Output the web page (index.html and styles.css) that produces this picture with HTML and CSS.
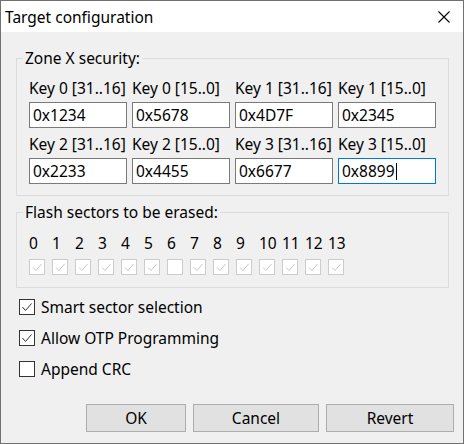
FILE: index.html
```html
<!DOCTYPE html>
<html>
<head>
<meta charset="utf-8">
<link rel="stylesheet" href="styles.css">
</head>
<body>
<div class="window">
  <div class="titlebar">
    <span class="title">Target configuration</span>
    <svg class="close" width="12" height="12" viewBox="0 0 12 12"><path d="M0.5 0.5 L11.5 11.5 M11.5 0.5 L0.5 11.5" stroke="#000" stroke-width="1.1" fill="none"/></svg>
  </div>
  <div class="content">
    <fieldset class="group keys">
      <legend>Zone X security:</legend>
      <div class="keygrid">
        <div class="cell"><div class="lbl">Key 0 [31..16]</div><div class="field">0x1234</div></div>
        <div class="cell"><div class="lbl">Key 0 [15..0]</div><div class="field">0x5678</div></div>
        <div class="cell"><div class="lbl">Key 1 [31..16]</div><div class="field">0x4D7F</div></div>
        <div class="cell"><div class="lbl">Key 1 [15..0]</div><div class="field">0x2345</div></div>
        <div class="cell"><div class="lbl">Key 2 [31..16]</div><div class="field">0x2233</div></div>
        <div class="cell"><div class="lbl">Key 2 [15..0]</div><div class="field">0x4455</div></div>
        <div class="cell"><div class="lbl">Key 3 [31..16]</div><div class="field">0x6677</div></div>
        <div class="cell"><div class="lbl">Key 3 [15..0]</div><div class="field focus">0x8899<span class="caret"></span></div></div>
      </div>
    </fieldset>
    <fieldset class="group sectors">
      <legend>Flash sectors to be erased:</legend>
      <div class="secgrid">
        <div class="sec"><span class="num">0</span><span class="dbox"><svg viewBox="0 0 14 14"><path d="M3 7.5 L6 10.5 L11.5 4" /></svg></span></div>
        <div class="sec"><span class="num">1</span><span class="dbox"><svg viewBox="0 0 14 14"><path d="M3 7.5 L6 10.5 L11.5 4" /></svg></span></div>
        <div class="sec"><span class="num">2</span><span class="dbox"><svg viewBox="0 0 14 14"><path d="M3 7.5 L6 10.5 L11.5 4" /></svg></span></div>
        <div class="sec"><span class="num">3</span><span class="dbox"><svg viewBox="0 0 14 14"><path d="M3 7.5 L6 10.5 L11.5 4" /></svg></span></div>
        <div class="sec"><span class="num">4</span><span class="dbox"><svg viewBox="0 0 14 14"><path d="M3 7.5 L6 10.5 L11.5 4" /></svg></span></div>
        <div class="sec"><span class="num">5</span><span class="dbox"><svg viewBox="0 0 14 14"><path d="M3 7.5 L6 10.5 L11.5 4" /></svg></span></div>
        <div class="sec"><span class="num">6</span><span class="dbox"></span></div>
        <div class="sec"><span class="num">7</span><span class="dbox"><svg viewBox="0 0 14 14"><path d="M3 7.5 L6 10.5 L11.5 4" /></svg></span></div>
        <div class="sec"><span class="num">8</span><span class="dbox"><svg viewBox="0 0 14 14"><path d="M3 7.5 L6 10.5 L11.5 4" /></svg></span></div>
        <div class="sec"><span class="num">9</span><span class="dbox"><svg viewBox="0 0 14 14"><path d="M3 7.5 L6 10.5 L11.5 4" /></svg></span></div>
        <div class="sec"><span class="num">10</span><span class="dbox"><svg viewBox="0 0 14 14"><path d="M3 7.5 L6 10.5 L11.5 4" /></svg></span></div>
        <div class="sec"><span class="num">11</span><span class="dbox"><svg viewBox="0 0 14 14"><path d="M3 7.5 L6 10.5 L11.5 4" /></svg></span></div>
        <div class="sec"><span class="num">12</span><span class="dbox"><svg viewBox="0 0 14 14"><path d="M3 7.5 L6 10.5 L11.5 4" /></svg></span></div>
        <div class="sec"><span class="num">13</span><span class="dbox"><svg viewBox="0 0 14 14"><path d="M3 7.5 L6 10.5 L11.5 4" /></svg></span></div>
      </div>
    </fieldset>
    <div class="options">
      <div class="opt"><span class="box"><svg viewBox="0 0 14 14"><path d="M2.5 7 L5.5 10.5 L11.5 3.5" /></svg></span><span>Smart sector selection</span></div>
      <div class="opt"><span class="box"><svg viewBox="0 0 14 14"><path d="M2.5 7 L5.5 10.5 L11.5 3.5" /></svg></span><span>Allow OTP Programming</span></div>
      <div class="opt"><span class="box"></span><span>Append CRC</span></div>
    </div>
    <div class="buttons">
      <button class="btn ok">OK</button>
      <button class="btn cancel">Cancel</button>
      <button class="btn revert">Revert</button>
    </div>
  </div>
</div>
</body>
</html>
```

FILE: styles.css
```css
html, body {
  margin: 0;
  padding: 0;
  background: #ffffff;
}
body {
  font-family: "Noto Sans", "DejaVu Sans", sans-serif;
  font-size: 15.5px;
  color: #000;
}
.window {
  box-sizing: border-box;
  width: 464px;
  height: 444px;
  border: 1px solid #707070;
  display: flex;
  flex-direction: column;
  background: #f0f0f0;
}
.titlebar {
  height: 31px;
  flex: none;
  background: #ffffff;
  display: flex;
  align-items: center;
  justify-content: space-between;
  padding: 0 13px 0 4px;
}
.title {
  font-size: 15.5px;
  line-height: 20px;
  padding-top: 1px;
}
.close {
  display: block;
}
.content {
  flex: 1;
  display: flex;
  flex-direction: column;
  padding: 0 14px 0 15px;
}
.group {
  margin: 0;
  border: 1px solid #dcdcdc;
  min-width: 0;
}
.group legend {
  padding: 0 2px;
  margin-left: -6px;
  line-height: 20px;
  font-size: 15.5px;
}
.keys {
  margin-top: 16px;
  padding: 10px 12px 11px 12px;
}
.keygrid {
  display: grid;
  grid-template-columns: repeat(4, 98px);
  column-gap: 5px;
  row-gap: 6px;
}
.lbl {
  line-height: 20px;
  margin-bottom: 4px;
  white-space: nowrap;
}
.field {
  box-sizing: border-box;
  height: 26px;
  border: 1px solid #7a7a7a;
  background: #fff;
  padding: 0 3px;
  line-height: 24px;
  display: flex;
  align-items: center;
}
.field.focus {
  border-color: #0078d7;
}
.caret {
  display: inline-block;
  width: 1px;
  height: 17px;
  background: #000;
  margin-left: 1px;
}
.sectors {
  margin-top: 6px;
  padding: 11px 12px 12px 12px;
}
.secgrid {
  display: grid;
  grid-template-columns: repeat(14, 23px);
}
.sec {
  display: flex;
  flex-direction: column;
  gap: 6px;
}
.num {
  line-height: 20px;
}
.dbox, .box {
  box-sizing: border-box;
  width: 16px;
  height: 16px;
  display: block;
  background: #fff;
}
.dbox {
  border: 1px solid #cccccc;
}
.dbox svg, .box svg {
  display: block;
  width: 14px;
  height: 14px;
  fill: none;
  stroke-width: 1;
}
.dbox svg {
  stroke: #c6c6c6;
}
.box {
  border: 1px solid #333333;
}
.box svg {
  stroke: #333333;
}
.options {
  margin-top: 11px;
  margin-left: 3px;
  display: flex;
  flex-direction: column;
  gap: 15px;
}
.opt {
  display: flex;
  align-items: center;
  gap: 6px;
  height: 16px;
  line-height: 16px;
}
.buttons {
  margin-top: auto;
  display: flex;
  justify-content: flex-end;
  gap: 7px;
  padding: 0 9px 11px 0;
  margin-right: -14px;
}
.btn {
  box-sizing: border-box;
  height: 28px;
  background: #e1e1e1;
  border: 1px solid #adadad;
  font-family: "Noto Sans", "DejaVu Sans", sans-serif;
  font-size: 15.5px;
  color: #000;
  padding: 0;
}
.ok { width: 100px; }
.cancel { width: 126px; }
.revert { width: 128px; }
```
